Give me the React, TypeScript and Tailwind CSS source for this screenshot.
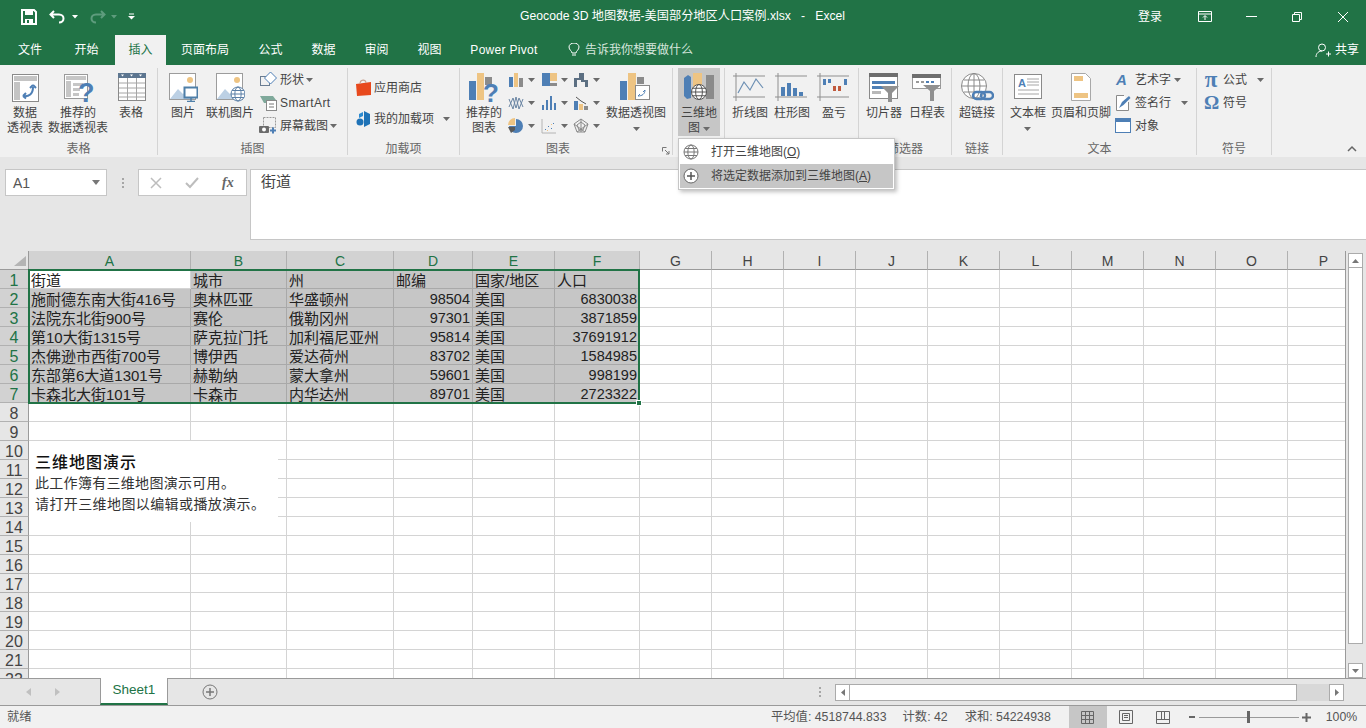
import React from "react";

const FONT = "[font-family:'Liberation_Sans','Noto_Sans_CJK_SC',sans-serif]";

const BLUE = "#4e7fb5";
const TAN = "#eec483";
const GREY = "#8b8b8b";

const Caret = ({ className = "" }: { className?: string }) => (
    <svg width="7" height="4" viewBox="0 0 7 4" className={className}>
        <path d="M0 0h7L3.500 4z" fill="#6a6a6a" />
    </svg>
);

const Svg: React.FC<{ w?: number; h?: number; children: React.ReactNode }> = ({ w = 30, h = 30, children }) => (
    <svg width={w} height={h} viewBox={`0 0 ${w} ${h}`} fill="none">
        {children}
    </svg>
);

const Globe = ({ x, y, r, c = "#5b7fa6" }: { x: number; y: number; r: number; c?: string }) => (
    <g stroke={c} strokeWidth="1" fill="#fff">
        <circle cx={x} cy={y} r={r} />
        <ellipse cx={x} cy={y} rx={r * 0.45} ry={r} fill="none" />
        <path d={`M${x - r} ${y}h${r * 2}M${x - r * 0.85} ${y - r * 0.5}h${r * 1.7}M${x - r * 0.85} ${y + r * 0.5}h${r * 1.7}`} />
    </g>
);

const Picture = () => (
    <>
        <rect x="1.500" y="1.500" width="26" height="26" fill="#fff" stroke="#9c9c9c" />
        <circle cx="22" cy="8" r="3" fill={TAN} />
        <path d="M2 27l8-10 5 5 3-3 8 8z" fill="#bcd0e4" />
    </>
);

const icons: Record<string, React.ReactNode> = {
    pivot: (
        <Svg>
            <rect x="2.500" y="2.500" width="26" height="27" fill="#fff" stroke="#8a8a8a" />
            <path d="M4 4h23v5H4zM4 10h6v18H4z" fill="#c4c4c4" />
            <path d="M13 24c6 1 10-2 10-9M13 24l3-3M13 24l3 2.500M23 13l-3 3M23 13l3 3" stroke={BLUE} strokeWidth="2" />
        </Svg>
    ),
    recPivot: (
        <Svg w={34} h={40}>
            <rect x="3.500" y="7.500" width="23" height="24" fill="#fff" stroke="#9a9a9a" />
            <path d="M5 9h20v4H5zM5 14h5v16H5zM12 16h10v3H12zM12 21h7v3H12zM12 26h6v3H12z" fill="#c6c6c6" />
            <text x="17" y="35" fontSize="27" fontWeight="700" fill={BLUE} fontFamily="Liberation Sans">?</text>
        </Svg>
    ),
    table: (
        <Svg>
            <rect x="2.500" y="1.500" width="27" height="27" fill="#fff" stroke="#8a8a8a" />
            <rect x="2" y="1" width="28" height="5" fill="#5d7690" />
            <path d="M3 11h26M3 16h26M3 21h26M3 25h26M11.500 6v22M20.500 6v22" stroke="#a6a6a6" />
            <path d="M5 2.500h3L6.500 4.500zM14 2.500h3L15.500 4.500zM23 2.500h3L24.500 4.500z" fill="#fff" />
        </Svg>
    ),
    picture: (
        <Svg>
            <Picture />
            <rect x="16.500" y="15.500" width="13" height="10" fill="#fff" stroke="#4e7fa8" strokeWidth="2" />
            <path d="M23 26v3M19 29.500h8" stroke="#4e7fa8" strokeWidth="1.500" />
        </Svg>
    ),
    online: (
        <Svg>
            <Picture />
            <Globe x={23} y={22} r={7} />
        </Svg>
    ),
    shape: (
        <Svg w={18} h={17}>
            <rect x="1.500" y="5.500" width="9" height="9" stroke="#6a7d92" />
            <path d="M11.500 1l6 6-6 6-6-6z" fill="#fff" stroke={BLUE} />
        </Svg>
    ),
    smartart: (
        <Svg w={18} h={17}>
            <path d="M1 2h13l3 4H8v3H5L1 2z" fill="#7fa99b" />
            <rect x="7.500" y="6.500" width="10" height="10" fill="#fff" stroke="#8a8a8a" />
            <path d="M10 10h5M10 13h5" stroke="#777" />
        </Svg>
    ),
    screenshot: (
        <Svg w={18} h={17}>
            <rect x="4.500" y="0.500" width="12" height="10" stroke="#999" strokeDasharray="2 1" />
            <rect x="0" y="9" width="10" height="7" rx="1" fill="#6c6c6c" />
            <circle cx="5" cy="12.500" r="2" fill="#fff" />
            <path d="M11 13.500h6M14 10.500v6" stroke={BLUE} strokeWidth="2" />
        </Svg>
    ),
    store: (
        <Svg w={16} h={18}>
            <path d="M0 5l15-2v13l-14 1z" fill="#e8491d" />
            <path d="M4 5c0-5 6-5 6-1" stroke="#c9a08f" strokeWidth="1.200" />
        </Svg>
    ),
    addins: (
        <Svg w={16} h={18}>
            <path d="M8 1l6 3v10l-6 3V9z" fill="#1f73b7" />
            <path d="M7 2L3 4v4l4-2z" fill="#2d8bd0" />
            <circle cx="4" cy="12" r="3.500" fill="#1f73b7" />
        </Svg>
    ),
    recChart: (
        <Svg w={34} h={40}>
            <rect x="2" y="14" width="7" height="19" fill={BLUE} />
            <rect x="10" y="6" width="7" height="27" fill={TAN} />
            <rect x="18" y="10" width="7" height="8" fill={GREY} />
            <text x="16" y="35" fontSize="26" fontWeight="700" fill={BLUE} fontFamily="Liberation Sans">?</text>
        </Svg>
    ),
    pivotChart: (
        <Svg w={32}>
            <rect x="0" y="9" width="7" height="19" fill={BLUE} />
            <rect x="8" y="1" width="8" height="27" fill={TAN} />
            <rect x="17" y="5" width="7" height="7" fill={GREY} />
            <rect x="15.500" y="13.500" width="14" height="14" fill="#fff" stroke="#8a8a8a" />
            <path d="M18 24c4 0 7-2 7-6M18 24l2-2M25 18l-2 2" stroke={BLUE} />
        </Svg>
    ),
    map3d: (
        <Svg w={32}>
            <path d="M1 6l4-3 3 2v21l-4 1-3-3z" fill={BLUE} />
            <rect x="10" y="1" width="9" height="16" fill={TAN} />
            <rect x="23" y="3" width="8" height="24" fill={GREY} />
            <Globe x={16} y={20} r={7.500} c="#555" />
        </Svg>
    ),
    line: (
        <Svg w={34} h={28}>
            <path d="M0 3h32M0 24h32M3 0v28" stroke="#8f8f8f" />
            <path d="M5 20l6-11 6 8 6-11 7 9" stroke="#6c8fb3" strokeWidth="1.200" />
        </Svg>
    ),
    column: (
        <Svg w={34} h={28}>
            <path d="M0 3h32M0 24h32M3 0v28" stroke="#8f8f8f" />
            <path d="M6 14h4v9H6zM12 10h4v13h-4zM18 15h4v8h-4zM24 19h4v4h-4z" fill={BLUE} />
        </Svg>
    ),
    winloss: (
        <Svg w={34} h={28}>
            <path d="M0 3h32M0 24h32M3 0v28" stroke="#8f8f8f" />
            <path d="M6 6h3v6H6zM11 6h3v4h-3zM27 6h3v6h-3z" fill={BLUE} />
            <path d="M16 13h3v5h-3zM21 13h3v5h-3z" fill="#c0593c" />
        </Svg>
    ),
    slicer: (
        <Svg w={30}>
            <rect x="0.500" y="1.500" width="28" height="25" fill="#fff" stroke="#8a8a8a" />
            <rect x="0" y="1" width="29" height="4" fill="#6e6e6e" />
            <path d="M3 9h23v3H3z" fill={BLUE} />
            <path d="M3 14h12v3H3z" fill={BLUE} />
            <path d="M3 19h9v3H3z" fill="#b8b8b8" />
            <path d="M12 14h18l-7 7v9h-4v-9z" fill="#909090" />
        </Svg>
    ),
    timeline: (
        <Svg w={30}>
            <rect x="0.500" y="2.500" width="28" height="14" fill="#fff" stroke="#9a9a9a" />
            <rect x="0" y="2" width="29" height="4" fill="#6e6e6e" />
            <path d="M4 9h3v2H4zM9 9h3v2H9z" fill="#9a9a9a" />
            <path d="M14 9h3v2h-3zM19 9h3v2h-3z" fill={BLUE} />
            <path d="M11 13h18l-7 6v10h-4V19z" fill="#909090" />
        </Svg>
    ),
    link: (
        <Svg w={34}>
            <circle cx="14" cy="14" r="12.500" stroke="#8a8a8a" fill="#fff" />
            <ellipse cx="14" cy="14" rx="6" ry="12.500" stroke="#8a8a8a" />
            <path d="M2 14h24M4 8h20M4 20h20M14 1.500v25" stroke="#8a8a8a" />
            <rect x="13" y="20" width="12" height="7" rx="3.500" stroke={BLUE} strokeWidth="2.400" fill="none" />
            <rect x="21" y="20" width="12" height="7" rx="3.500" stroke={BLUE} strokeWidth="2.400" fill="none" />
        </Svg>
    ),
    textbox: (
        <Svg w={30}>
            <rect x="1.500" y="2.500" width="27" height="24" fill="#fff" stroke="#8a8a8a" />
            <text x="5" y="15" fontSize="11" fontWeight="700" fill={BLUE} fontFamily="Liberation Sans">A</text>
            <path d="M14 7h12M14 10h12M14 13h12M5 18h21M5 22h21" stroke="#a6a6a6" />
        </Svg>
    ),
    header: (
        <Svg w={24} h={30}>
            <path d="M2.500 1.500h14l5 5v22h-19z" fill="#fff" stroke="#a8a8a8" />
            <path d="M5 4h9v5H5zM5 21h14v5H5z" fill={TAN} />
        </Svg>
    ),
    wordart: (
        <Svg w={18} h={20}>
            <text x="2" y="15" fontSize="15" fontWeight="700" fontStyle="italic" fill={BLUE} fontFamily="Liberation Sans">A</text>
        </Svg>
    ),
    signature: (
        <Svg w={16} h={17}>
            <path d="M9 1.500H1.500v15h12V8" stroke="#8a8a8a" fill="#fff" />
            <path d="M4 14l3-6 7-6 1.500 2-7 7z" fill={BLUE} />
        </Svg>
    ),
    object: (
        <Svg w={16} h={15}>
            <rect x="0.500" y="0.500" width="15" height="14" fill="#fff" stroke={BLUE} />
            <rect x="0" y="0" width="16" height="4" fill={BLUE} />
        </Svg>
    ),
};

const Big: React.FC<{
    w: number;
    icon: string;
    lines: string[];
    caret?: "below" | "inline";
    active?: boolean;
}> = ({ w, icon, lines, caret, active }) => (
    <div
        style={{ width: w }}
        className={`flex h-[68px] shrink-0 flex-col items-center pt-[4px] ${active ? "bg-[#c6c6c6]" : ""}`}
    >
        <div className="flex h-[30px] items-center justify-center">{icons[icon]}</div>
        <div className="mt-[4px] text-center text-xs leading-[15px] whitespace-nowrap text-[#444]">
            {lines.map((l, i) => (
                <div key={l} className="flex items-center justify-center gap-[3px]">
                    {l}
                    {caret === "inline" && i === lines.length - 1 && <Caret />}
                </div>
            ))}
            {caret === "below" && (
                <div className="flex h-[15px] items-center justify-center">
                    <Caret />
                </div>
            )}
        </div>
    </div>
);

const Group: React.FC<{ w: number; label: string; className?: string; labelClass?: string; children: React.ReactNode }> = ({
    w,
    label,
    className = "",
    labelClass = "",
    children,
}) => (
    <div style={{ width: w }} className="flex h-[87px] shrink-0 flex-col border-r border-[#d4d4d4]">
        <div className={`flex h-[73px] shrink-0 ${className}`}>{children}</div>
        <div className={`pt-[1px] text-center text-xs leading-[15px] text-[#666] ${labelClass}`}>{label}</div>
    </div>
);

// the nine small chart type buttons, drawn on a 16px box
const chartIcons: React.ReactNode[] = [
    <g key="a">
        <path d="M1 5h4v10H1z" fill={BLUE} />
        <path d="M6 1h4v14H6z" fill={TAN} />
        <path d="M11 6h4v9h-4z" fill={GREY} />
    </g>,
    <g key="b">
        <path d="M1 1h8v13H1z" fill={BLUE} />
        <path d="M9 1h7v8H9z" fill={TAN} />
        <path d="M9 11h7v3H9z" fill={GREY} />
    </g>,
    <path key="c" d="M1 15V6h5V1h5v7h4v7h-3v-5H8V3H8v5H4v7z" fill="#5c6f82" />,
    <path key="d" d="M1 4l4 10 3-12 3 12 4-10M1 12l4-9 3 10 3-10 4 9" stroke="#6a85a3" />,
    <path key="e" d="M1 10h2v5H1zM5 5h2v10H5zM9 1h2v14H9zM13 8h2v7h-2z" fill={BLUE} />,
    <g key="f">
        <path d="M1 6h4v9H1z" fill={BLUE} />
        <path d="M6 9h4v6H6z" fill={TAN} />
        <path d="M11 11h4v4h-4z" fill={GREY} />
        <path d="M3 2l5 4 5 3" stroke="#555" />
    </g>,
    <g key="g">
        <path d="M8 1a7 7 0 1 1-7 7h7z" fill={BLUE} />
        <path d="M7 0a7 7 0 0 0-7 7h7z" fill={TAN} />
        <path d="M0 9h7v3L3 15z" fill="#5a5a5a" />
    </g>,
    <g key="h">
        <path d="M1 1v14h14" stroke="#b4b4b4" />
        <path d="M4 11h1v1H4zM7 8h1v1H7zM10 10h1v1h-1zM12 5h1v1h-1z" fill={BLUE} />
        <path d="M6 12h1v1H6zM10 6h1v1h-1z" fill={TAN} />
    </g>,
    <g key="i" stroke="#8a8a8a">
        <path d="M8 1l7 5-3 8H4L1 6z" />
        <path d="M8 4l4 3-2 5H6L4 7z" />
        <path d="M8 1v13M1 6l11 8M15 6L4 14" />
    </g>,
];

const Ribbon = () => (
    <div className="flex h-[92px] shrink-0 bg-[#f1f1f1] pt-[3px]">
        <Group w={158} label="表格" className="pl-[3px]">
            <Big w={44} icon="pivot" lines={["数据", "透视表"]} />
            <Big w={62} icon="recPivot" lines={["推荐的", "数据透视表"]} />
            <Big w={44} icon="table" lines={["表格"]} />
        </Group>
        <Group w={190} label="插图" className="pl-[3px]">
            <Big w={44} icon="picture" lines={["图片"]} />
            <Big w={50} icon="online" lines={["联机图片"]} />
            <div className="ml-[4px] flex flex-col">
                <div className="flex h-[23px] items-center whitespace-nowrap text-xs text-[#444]">
                    <span className="mr-[3px] w-[18px]">{icons.shape}</span>形状<Caret className="ml-[2px]" />
                </div>
                <div className="flex h-[23px] items-center whitespace-nowrap text-xs tracking-[0.4px] text-[#444]">
                    <span className="mr-[3px] w-[18px]">{icons.smartart}</span>SmartArt
                </div>
                <div className="flex h-[23px] items-center whitespace-nowrap text-xs text-[#444]">
                    <span className="mr-[3px] w-[18px]">{icons.screenshot}</span>屏幕截图<Caret className="ml-[2px]" />
                </div>
            </div>
        </Group>
        <Group w={112} label="加载项" className="flex-col gap-[8px] pt-[8px] pl-[8px]">
            <div className="flex h-[23px] items-center text-xs whitespace-nowrap text-[#444]">
                <span className="mr-[1px] w-[17px]">{icons.store}</span>应用商店
            </div>
            <div className="flex h-[23px] items-center text-xs whitespace-nowrap text-[#444]">
                <span className="mr-[1px] w-[17px]">{icons.addins}</span>我的加载项<Caret className="ml-[9px]" />
            </div>
        </Group>
        <Group w={213} label="图表" className="pl-[4px]" labelClass="pr-[16px]">
            <Big w={40} icon="recChart" lines={["推荐的", "图表"]} />
            <div className="ml-[4px] grid w-[98px] grid-cols-3 grid-rows-[23px_23px_23px]">
                {chartIcons.map((c, i) => (
                    <div key={i} className="flex items-center gap-[4px]">
                        <svg width="16" height="16" viewBox="0 0 16 16" fill="none">
                            {c}
                        </svg>
                        <Caret />
                    </div>
                ))}
            </div>
            <Big w={60} icon="pivotChart" lines={["数据透视图"]} caret="below" />
        </Group>
        <Group w={52} label="" className="pl-[5px]">
            <Big w={42} icon="map3d" lines={["三维地", "图"]} caret="inline" active />
        </Group>
        <Group w={134} label="" className="pl-[4px]">
            <Big w={42} icon="line" lines={["折线图"]} />
            <Big w={42} icon="column" lines={["柱形图"]} />
            <Big w={42} icon="winloss" lines={["盈亏"]} />
        </Group>
        <Group w={93} label="筛选器" className="pl-[4px]">
            <Big w={42} icon="slicer" lines={["切片器"]} />
            <Big w={44} icon="timeline" lines={["日程表"]} />
        </Group>
        <Group w={51} label="链接" className="pl-[3px]">
            <Big w={44} icon="link" lines={["超链接"]} />
        </Group>
        <Group w={194} label="文本" className="pl-[3px]">
            <Big w={44} icon="textbox" lines={["文本框"]} caret="below" />
            <Big w={62} icon="header" lines={["页眉和页脚"]} />
            <div className="ml-[2px] flex flex-col">
                <div className="flex h-[23px] items-center text-xs whitespace-nowrap text-[#444]">
                    <span className="mr-[3px] flex w-[18px] justify-center">{icons.wordart}</span>艺术字<Caret className="ml-[3px]" />
                </div>
                <div className="flex h-[23px] items-center text-xs whitespace-nowrap text-[#444]">
                    <span className="mr-[3px] flex w-[18px] justify-center">{icons.signature}</span>签名行<Caret className="ml-[10px]" />
                </div>
                <div className="flex h-[23px] items-center text-xs whitespace-nowrap text-[#444]">
                    <span className="mr-[3px] flex w-[18px] justify-center">{icons.object}</span>对象
                </div>
            </div>
        </Group>
        <Group w={75} label="符号" className="flex-col pl-[7px]">
            <div className="flex h-[23px] items-center text-xs whitespace-nowrap text-[#444]">
                <span className="mr-[5px] w-[14px] text-center text-[23px] leading-[23px] font-bold text-[#4e7fb5] [font-family:'Liberation_Serif',serif]">π</span>
                公式<Caret className="ml-[10px]" />
            </div>
            <div className="flex h-[23px] items-center text-xs whitespace-nowrap text-[#444]">
                <span className="mr-[5px] w-[14px] text-center text-[19px] leading-[23px] font-bold text-[#4e7fb5] [font-family:'Liberation_Serif',serif]">Ω</span>
                符号
            </div>
        </Group>
        <div className="flex flex-1 items-end justify-end pr-[8px] pb-[5px]">
            <svg width="12" height="7" viewBox="0 0 12 7" fill="none">
                <path d="M2 6l4-4 4 4" stroke="#666" strokeWidth="1.500" />
            </svg>
        </div>
    </div>
);

const tabs: [string, number, string][] = [
    ["文件", 56, ""],
    ["开始", 57, ""],
    ["插入", 51, "active"],
    ["页面布局", 78, ""],
    ["公式", 53, ""],
    ["数据", 53, ""],
    ["审阅", 53, ""],
    ["视图", 53, ""],
    ["Power Pivot", 96, ""],
];

const TitleBar = () => (
    <div className="relative flex h-[33px] shrink-0 items-center bg-[#217346] text-white">
        <div className="ml-[21px] flex items-center">
            <svg width="16" height="16" viewBox="0 0 16 16" fill="none">
                <path d="M1 1h12l2 2v12H1z" stroke="#fff" strokeWidth="2" />
                <path d="M4 1h8v5H4zM4 10h8v5H4z" fill="#fff" />
                <path d="M6 11h2v3H6z" fill="#217346" />
            </svg>
            <svg width="18" height="14" viewBox="0 0 18 14" fill="none" className="ml-[12px]">
                <path d="M5 1L1.500 4.500 5 8M2 4.500h8c6 0 6 8 0 8" stroke="#fff" strokeWidth="2" />
            </svg>
            <svg width="6" height="4" viewBox="0 0 6 4" className="ml-[5px]">
                <path d="M0 0h6L3 3.500z" fill="#fff" />
            </svg>
            <svg width="18" height="14" viewBox="0 0 18 14" fill="none" className="ml-[10px]">
                <path d="M13 1l3.500 3.500L13 8M16 4.500H8c-6 0-6 8 0 8" stroke="#5e9c7d" strokeWidth="2" />
            </svg>
            <svg width="6" height="4" viewBox="0 0 6 4" className="ml-[5px]">
                <path d="M0 0h6L3 3.500z" fill="#5e9c7d" />
            </svg>
            <svg width="7" height="7" viewBox="0 0 7 7" fill="none" className="ml-[11px]">
                <path d="M1 1h5" stroke="#fff" />
                <path d="M0 3h7L3.500 6.500z" fill="#fff" />
            </svg>
        </div>
        <div className="ml-[385px] text-[12.2px] whitespace-pre">Geocode 3D 地图数据-美国部分地区人口案例.xlsx   -   Excel</div>
        <div className="ml-auto flex items-center">
            <span className="mr-[36px] text-xs">登录</span>
            <svg width="14" height="11" viewBox="0 0 14 11" fill="none" className="mr-[34px]">
                <path d="M.5.500h13v10H.500zM.500 3h13M7 9V5M5 6.500l2-2 2 2" stroke="#fff" />
            </svg>
            <svg width="11" height="1" viewBox="0 0 11 1" className="mr-[35px]">
                <path d="M0 .5h11" stroke="#fff" />
            </svg>
            <svg width="10" height="10" viewBox="0 0 10 10" fill="none" className="mr-[36px]">
                <path d="M.5 2.500h7v7h-7zM2.500 2.500v-2h7v7h-2" stroke="#fff" />
            </svg>
            <svg width="10" height="10" viewBox="0 0 10 10" fill="none" className="mr-[18px]">
                <path d="M0 0l10 10M10 0L0 10" stroke="#fff" />
            </svg>
        </div>
    </div>
);

const TabBar = () => (
    <div className="flex h-[32px] shrink-0 items-end bg-[#217346] pl-[2px] text-xs text-white">
        {tabs.map(([t, w, a]) => (
            <div
                key={t}
                style={{ width: w }}
                className={`flex h-[30px] items-center justify-center whitespace-nowrap ${a ? "bg-[#f1f1f1] text-[#217346]" : ""} ${
                    t === "Power Pivot" ? "tracking-[0.3px]" : ""
                }`}
            >
                {t}
            </div>
        ))}
        <div className="ml-[16px] flex h-[30px] items-center gap-[5px] text-[#d6e6dd]">
            <svg width="12" height="14" viewBox="0 0 12 14" fill="none">
                <path d="M4 10c0-2-3-3-3-6a5 4 0 0 1 10 0c0 3-3 4-3 6zM4 12h4" stroke="#fff" />
            </svg>
            告诉我你想要做什么
        </div>
        <div className="ml-auto flex h-[30px] items-center gap-[4px] pr-[7px]">
            <svg width="16" height="15" viewBox="0 0 16 15" fill="none">
                <circle cx="7" cy="4.500" r="3.500" stroke="#fff" />
                <path d="M1 14c0-4 3-6 6-6M11 11h5M13.500 8.500v5" stroke="#fff" />
            </svg>
            共享
        </div>
    </div>
);

const FormulaBar = () => (
    <div className="flex h-[94px] shrink-0 items-start bg-[#e6e6e6] pt-[12px] text-[#444]">
        <div className="ml-[5px] flex h-[27px] w-[102px] items-center justify-between border border-[#c6c6c6] bg-white pr-[6px] pl-[7px] text-sm text-[#555]">
            A1
            <svg width="8" height="5" viewBox="0 0 8 5">
                <path d="M0 0h8L4 5z" fill="#777" />
            </svg>
        </div>
        <div className="flex h-[27px] w-[31px] flex-col items-center justify-center gap-[2px]">
            <span className="size-[2px] bg-[#a6a6a6]" />
            <span className="size-[2px] bg-[#a6a6a6]" />
            <span className="size-[2px] bg-[#a6a6a6]" />
        </div>
        <div className="flex h-[27px] w-[109px] items-center border border-[#c6c6c6] bg-white">
            <svg width="12" height="12" viewBox="0 0 12 12" fill="none" className="ml-[11px]">
                <path d="M1 1l10 10M11 1L1 11" stroke="#bdbdbd" strokeWidth="1.500" />
            </svg>
            <svg width="14" height="12" viewBox="0 0 14 12" fill="none" className="ml-[23px]">
                <path d="M1 6l4 4 8-9" stroke="#bdbdbd" strokeWidth="2" />
            </svg>
            <span className="ml-[23px] text-[14px] font-bold text-[#666] italic [font-family:'Liberation_Serif',serif]">fx</span>
        </div>
        <div className="ml-[3px] h-[71px] flex-1 border-y border-l border-[#c6c6c6] bg-white pt-[2px] pl-[10px] text-[15px] leading-[20px]">
            街道
        </div>
    </div>
);

const cols = ["A", "B", "C", "D", "E", "F", "G", "H", "I", "J", "K", "L", "M", "N", "O", "P"];

const data: string[][] = [
    ["街道", "城市", "州", "邮编", "国家/地区", "人口"],
    ["施耐德东南大街416号", "奥林匹亚", "华盛顿州", "98504", "美国", "6830038"],
    ["法院东北街900号", "赛伦", "俄勒冈州", "97301", "美国", "3871859"],
    ["第10大街1315号", "萨克拉门托", "加利福尼亚州", "95814", "美国", "37691912"],
    ["杰佛逊市西街700号", "博伊西", "爱达荷州", "83702", "美国", "1584985"],
    ["东部第6大道1301号", "赫勒纳", "蒙大拿州", "59601", "美国", "998199"],
    ["卡森北大街101号", "卡森市", "内华达州", "89701", "美国", "2723322"],
];

const Sheet = () => (
    <div className="relative h-[427px] w-[1346px] overflow-hidden border-r border-[#9a9a9a]">
        <div className="grid w-[1419px] grid-cols-[29px_162px_96px_107px_79px_82px_85px_72px_72px_72px_72px_72px_72px_72px_72px_72px_72px] auto-rows-[19px] text-[15px] leading-[21px] text-[#222]">
            <div className="relative border-r border-b border-[#9a9a9a] bg-[#e6e6e6]">
                <svg width="12" height="10" viewBox="0 0 12 10" className="absolute right-[2px] bottom-[3px]">
                    <path d="M12 0v10H0z" fill="#b4b4b4" />
                </svg>
            </div>
            {cols.map((c, i) => (
                <div
                    key={c}
                    className={`border-r border-b border-r-[#b1b1b1] border-b-[#9a9a9a] text-center text-sm leading-[20px] ${
                        i < 6 ? "bg-[#d2d2d2] text-[#217346]" : "bg-[#e6e6e6] text-[#444]"
                    }`}
                >
                    {c}
                </div>
            ))}
            {Array.from({ length: 22 }).map((_, r) => (
                <React.Fragment key={r}>
                    <div
                        className={`border-r border-b border-r-[#9a9a9a] border-b-[#b1b1b1] text-center text-[16px] leading-[21px] ${
                            r < 7 ? "bg-[#d2d2d2] text-[#217346]" : "bg-[#e6e6e6] text-[#444]"
                        }`}
                    >
                        {r + 1}
                    </div>
                    {cols.map((c, i) => {
                        const v = r < 7 && i < 6 ? data[r][i] : "";
                        const numeric = /^\d+$/.test(v);
                        const selected = r < 7 && i < 6 && !(r === 0 && i === 0);
                        return (
                            <div
                                key={c}
                                className={`overflow-hidden border-r border-b whitespace-nowrap ${
                                    selected ? "border-[#a9a9a9] bg-[#c6c6c6]" : "border-[#d4d4d4] bg-white"
                                } ${numeric ? "pr-[2px] text-right text-[14.500px]" : "pl-[2px]"}`}
                            >
                                {v}
                            </div>
                        );
                    })}
                </React.Fragment>
            ))}
        </div>
        {/* selection frame */}
        <div className="absolute top-[18px] left-[28px] h-[135px] w-[612px] border-2 border-[#217346]" />
        <div className="absolute top-[149px] left-[636px] size-[6px] border border-white bg-[#217346]" />
        {/* 3D map notice sits on top of the cells */}
        <div className="absolute top-[190px] left-[29px] h-[81px] w-[249px] bg-white pt-[12px] pl-[6px] text-[#333]">
            <div className="text-[16px] leading-[20px] font-medium tracking-[1px] text-[#111]">三维地图演示</div>
            <div className="text-[14px] leading-[21px] tracking-[0.300px]">此工作簿有三维地图演示可用。</div>
            <div className="text-[14px] leading-[21px] tracking-[0.400px]">请打开三维地图以编辑或播放演示。</div>
        </div>
    </div>
);

const VScroll = () => (
    <div className="flex h-[427px] w-[20px] flex-col items-start bg-[#e6e6e6] pt-[2px] pl-[2px]">
        <div className="flex h-[15px] w-[15px] shrink-0 items-center justify-center border border-[#ababab] bg-white">
            <svg width="7" height="4" viewBox="0 0 7 4">
                <path d="M0 4h7L3.500 0z" fill="#777" />
            </svg>
        </div>
        <div className="h-[376px] w-[15px] shrink-0 border-x border-b border-[#ababab] bg-white" />
        <div className="mt-auto flex h-[15px] w-[15px] shrink-0 items-center justify-center border border-[#ababab] bg-white">
            <svg width="7" height="4" viewBox="0 0 7 4">
                <path d="M0 0h7L3.500 4z" fill="#777" />
            </svg>
        </div>
    </div>
);

const SheetTabs = () => (
    <div className="flex h-[28px] shrink-0 items-center border-y border-[#9a9a9a] bg-[#e6e6e6]">
        <svg width="6" height="8" viewBox="0 0 6 8" className="ml-[26px]">
            <path d="M5 0v8L0 4z" fill="#c0c0c0" />
        </svg>
        <svg width="6" height="8" viewBox="0 0 6 8" className="ml-[22px]">
            <path d="M1 0v8l5-4z" fill="#c0c0c0" />
        </svg>
        <div className="ml-[40px] -mt-px flex h-[27px] w-[68px] items-center justify-center border-x border-b-2 border-[#9a9a9a] border-b-[#217346] bg-white text-[13.500px] text-[#217346]">
            Sheet1
        </div>
        <svg width="16" height="16" viewBox="0 0 16 16" fill="none" className="ml-[34px]">
            <circle cx="8" cy="8" r="7" stroke="#777" />
            <path d="M4 8h8M8 4v8" stroke="#777" strokeWidth="1.500" />
        </svg>
        <div className="ml-[601px] flex flex-col gap-[2px]">
            <span className="size-[2px] bg-[#a6a6a6]" />
            <span className="size-[2px] bg-[#a6a6a6]" />
            <span className="size-[2px] bg-[#a6a6a6]" />
        </div>
        <div className="ml-[14px] flex h-[17px] w-[509px] items-stretch">
            <div className="flex w-[15px] items-center justify-center border border-[#ababab] bg-white">
                <svg width="4" height="7" viewBox="0 0 4 7">
                    <path d="M4 0v7L0 3.500z" fill="#777" />
                </svg>
            </div>
            <div className="w-[447px] border-y border-r border-[#ababab] bg-white" />
            <div className="flex-1 bg-[#d8d8d8]" />
            <div className="flex w-[15px] items-center justify-center border border-[#ababab] bg-white">
                <svg width="4" height="7" viewBox="0 0 4 7">
                    <path d="M0 0v7l4-3.500z" fill="#777" />
                </svg>
            </div>
        </div>
    </div>
);

const StatusBar = () => (
    <div className="flex h-[22px] shrink-0 items-center bg-[#f1f1f1] text-[12.300px] text-[#555]">
        <span className="ml-[7px] w-[26px] whitespace-nowrap">就绪</span>
        <span className="ml-[738px]">平均值: 4518744.833</span>
        <span className="ml-[16px]">计数: 42</span>
        <span className="ml-[17px]">求和: 54224938</span>
        <div className="ml-[18px] flex h-full w-[38px] items-center justify-center bg-[#c6c6c6]">
            <svg width="13" height="13" viewBox="0 0 13 13" fill="none">
                <path d="M.5.500h12v12H.500zM4.500.500v12M8.500.500v12M.500 4.500h12M.500 8.500h12" stroke="#666" />
            </svg>
        </div>
        <svg width="14" height="14" viewBox="0 0 14 14" fill="none" className="ml-[12px]">
            <path d="M.5.500h13v13H.500zM3.500 3.500h7v7h-7zM5 5.500h4M5 7.500h4" stroke="#666" />
        </svg>
        <svg width="14" height="13" viewBox="0 0 14 13" fill="none" className="ml-[23px]">
            <path d="M.5.500h13v12H.500zM.500 8.500h13M5.500.500v8M8.500.500v8" stroke="#666" />
        </svg>
        <div className="ml-[19px] flex items-center">
            <span className="h-[2px] w-[6px] bg-[#666]" />
            <div className="relative ml-[4px] h-px w-[100px] bg-[#9a9a9a]">
                <span className="absolute top-[-6px] left-[48px] h-[12px] w-[3px] bg-[#666]" />
            </div>
            <svg width="9" height="9" viewBox="0 0 9 9" fill="none" className="ml-[3px]">
                <path d="M0 4.500h9M4.500 0v9" stroke="#666" strokeWidth="2" />
            </svg>
        </div>
        <span className="ml-[15px]">100%</span>
    </div>
);

export default function App() {
    return (
        <div className={`relative flex h-[728px] w-[1366px] flex-col overflow-hidden bg-white ${FONT}`}>
            <TitleBar />
            <TabBar />
            <Ribbon />
            <FormulaBar />
            <div className="flex shrink-0 bg-[#e6e6e6]">
                <Sheet />
                <VScroll />
            </div>
            <SheetTabs />
            <StatusBar />

            {/* dropdown of the 3D map button */}
            <div className="absolute top-[138px] left-[678px] w-[217px] border border-[#c6c6c6] bg-white p-px text-xs text-[#444] shadow-[2px_2px_4px_rgba(0,0,0,0.25)]">
                <div className="flex h-[24px] items-center">
                    <svg width="16" height="16" viewBox="0 0 16 16" className="ml-[3px]">
                        <Globe x={8} y={8} r={7} c="#777" />
                    </svg>
                    <span className="ml-[12px]">
                        打开三维地图(<u>O</u>)
                    </span>
                </div>
                <div className="flex h-[24px] items-center bg-[#c6c6c6]">
                    <svg width="16" height="16" viewBox="0 0 16 16" fill="none" className="ml-[3px]">
                        <circle cx="8" cy="8" r="7" fill="#fff" stroke="#666" />
                        <path d="M4 8h8M8 4v8" stroke="#555" strokeWidth="1.500" />
                    </svg>
                    <span className="ml-[12px]">
                        将选定数据添加到三维地图(<u>A</u>)
                    </span>
                </div>
            </div>

            {/* launcher of the chart group */}
            <svg width="8" height="8" viewBox="0 0 8 8" fill="none" className="absolute top-[147px] left-[662px]">
                <path d="M.5.500h4M.500.500v4M3 3l4 4M7 4v3H4" stroke="#777" />
            </svg>
        </div>
    );
}
